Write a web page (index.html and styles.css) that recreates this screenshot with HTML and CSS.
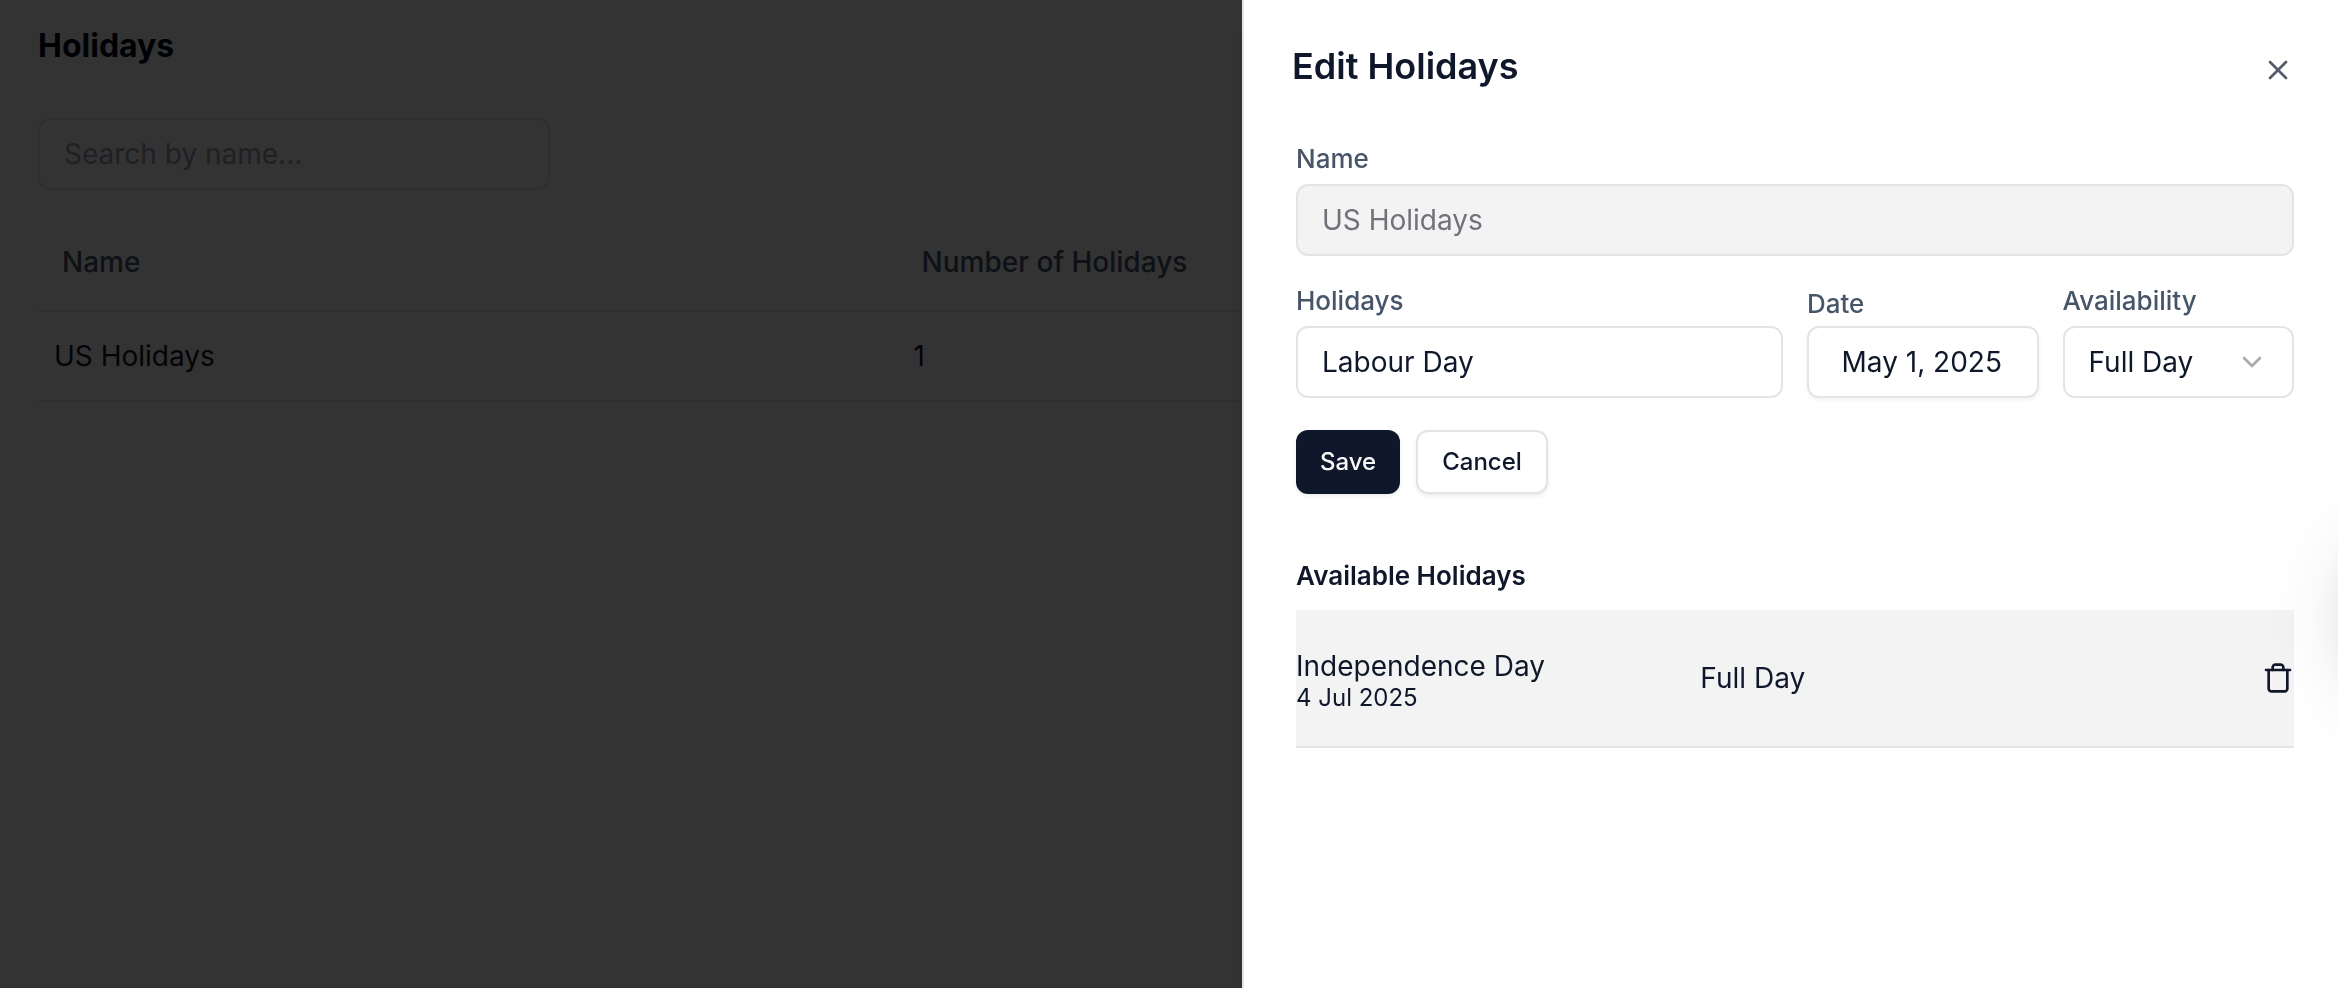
FILE: index.html
```html
<!DOCTYPE html>
<html lang="en">
<head>
<meta charset="utf-8">
<meta name="viewport" content="width=device-width, initial-scale=1">
<title>Holidays</title>
<link rel="stylesheet" href="styles.css">
</head>
<body>
<main class="page">
  <h1 class="page-title">Holidays</h1>
  <input class="input search" type="text" placeholder="Search by name..." aria-label="Search by name">
  <table class="table">
    <thead>
      <tr><th class="col-name" scope="col">Name</th><th scope="col">Number of Holidays</th></tr>
    </thead>
    <tbody>
      <tr><td>US Holidays</td><td>1</td></tr>
    </tbody>
  </table>
</main>
<div class="overlay"></div>
<aside class="drawer" role="dialog" aria-labelledby="drawer-title">
  <header class="drawer-header">
    <h2 class="drawer-title" id="drawer-title">Edit Holidays</h2>
    <button class="icon-button close" type="button" aria-label="Close">
      <svg class="icon" viewBox="0 0 24 24"><path d="M18 6 6 18"/><path d="m6 6 12 12"/></svg>
    </button>
  </header>
  <form class="form">
    <div class="field">
      <label class="label" for="group-name">Name</label>
      <input class="input" id="group-name" type="text" value="US Holidays" disabled>
    </div>
    <div class="field-row">
      <div class="field field-wide">
        <label class="label" for="holiday">Holidays</label>
        <input class="input" id="holiday" type="text" value="Labour Day">
      </div>
      <div class="field field-date">
        <label class="label" for="date">Date</label>
        <button class="input date-button" id="date" type="button">May 1, 2025</button>
      </div>
      <div class="field">
        <label class="label" for="availability">Availability</label>
        <div class="select-wrap">
          <select class="input select" id="availability">
            <option>Full Day</option>
            <option>Half Day</option>
          </select>
          <svg class="icon chevron" viewBox="0 0 24 24" aria-hidden="true"><path d="m6 9 6 6 6-6"/></svg>
        </div>
      </div>
    </div>
    <div class="actions">
      <button class="button primary" type="button">Save</button>
      <button class="button" type="button">Cancel</button>
    </div>
  </form>
  <section class="available">
    <h3 class="section-title">Available Holidays</h3>
    <ul class="list">
      <li class="item">
        <div class="item-main">
          <div class="item-name">Independence Day</div>
          <div class="item-date">4 Jul 2025</div>
        </div>
        <div class="item-type">Full Day</div>
        <button class="icon-button" type="button" aria-label="Delete Independence Day">
          <svg class="icon" viewBox="0 0 24 24"><path d="M3 6h18"/><path d="M19 6v14c0 1-1 2-2 2H7c-1 0-2-1-2-2V6"/><path d="M8 6V4c0-1 1-2 2-2h4c1 0 2 1 2 2v2"/></svg>
        </button>
      </li>
    </ul>
  </section>
</aside>
<div class="edge-glow"></div>
</body>
</html>
```
FILE: styles.css
```css
*,
*::before,
*::after {
  box-sizing: border-box;
}

body {
  margin: 0;
  min-height: 100vh;
  overflow: hidden;
  background: #fff;
  color: #0f172a;
  font-family: Inter, "Liberation Sans", sans-serif;
  font-size: 28px;
  line-height: 40px;
}

h1,
h2,
h3,
ul {
  margin: 0;
  padding: 0;
}

button,
input,
select {
  font: inherit;
  color: inherit;
}

.page {
  min-height: 100vh;
  padding: 26px 38px;
  border-bottom: 1px solid #f8ecf8;
}

.page-title {
  margin-bottom: 52px;
  color: #020617;
  font-size: 32px;
  font-weight: 700;
}

.input {
  display: block;
  width: 100%;
  height: 72px;
  padding: 0 24px;
  border: 2px solid #e4e4e4;
  border-radius: 12px;
  background: #fff;
}

.input:disabled {
  background: #f3f3f3;
  color: #71717a;
}

.search {
  width: 512px;
  margin-bottom: 28px;
}

.search::placeholder {
  color: #9a9ab4;
  opacity: 1;
}

.table {
  width: 100%;
  border-collapse: separate;
  border-spacing: 0;
}

.table th,
.table td {
  padding: 24px 16px;
  border-bottom: 2px solid #e4e4e7;
  text-align: left;
}

.table th {
  padding: 24px 24px 28px;
  color: #475569;
  font-weight: 500;
}

.table .col-name {
  width: 38%;
}

.overlay {
  position: fixed;
  inset: 0;
  background: rgba(0, 0, 0, 0.8);
}

.drawer {
  position: fixed;
  top: 0;
  right: 0;
  bottom: 0;
  width: 1096px;
  max-width: 100%;
  padding: 48px 44px 48px 48px;
  border-left: 2px solid #e4e4e4;
  background: #fff;
  box-shadow: 0 20px 30px -6px rgba(0, 0, 0, 0.1), 0 8px 12px -8px rgba(0, 0, 0, 0.1);
}

.drawer-header {
  display: flex;
  align-items: flex-end;
  justify-content: space-between;
  margin-bottom: 59px;
}

.drawer-title {
  margin-bottom: 2px;
  font-size: 36px;
  font-weight: 600;
  line-height: 36px;
}

.icon-button {
  display: block;
  width: 32px;
  height: 32px;
  padding: 0;
  border: 0;
  background: none;
}

.icon {
  display: block;
  width: 32px;
  height: 32px;
  fill: none;
  stroke: currentColor;
  stroke-width: 2;
  stroke-linecap: round;
  stroke-linejoin: round;
}

.close {
  opacity: 0.7;
}

.form,
.available {
  margin-left: 4px;
}

.field {
  display: flex;
  flex-direction: column;
  justify-content: flex-end;
  gap: 11px;
}

.field-date {
  gap: 8px;
}

.field-row {
  display: grid;
  grid-template-columns: repeat(4, minmax(0, 1fr));
  gap: 24px;
  margin-top: 31px;
}

.field-wide {
  grid-column: span 2;
}

.label {
  color: #475569;
  font-size: 26px;
  font-weight: 500;
  line-height: 28px;
}

.date-button {
  padding: 0 2px 0 0;
  box-shadow: 0 2px 4px rgba(0, 0, 0, 0.05);
}

.select-wrap {
  position: relative;
}

.select {
  appearance: none;
}

.chevron {
  position: absolute;
  top: 20px;
  right: 26px;
  color: #aaa;
  pointer-events: none;
}

.actions {
  display: flex;
  gap: 16px;
  margin-top: 32px;
}

.button {
  height: 64px;
  padding: 0 24px;
  border: 2px solid #e4e4e4;
  border-radius: 12px;
  background: #fff;
  box-shadow: 0 2px 4px rgba(0, 0, 0, 0.08);
  font-size: 24px;
  font-weight: 500;
}

.primary {
  border: 0;
  background: #0f172a;
  color: #f8fafc;
}

.available {
  margin-top: 68px;
}

.section-title {
  margin-bottom: 20px;
  font-size: 26px;
  font-weight: 600;
  line-height: 28px;
}

.list {
  list-style: none;
}

.item {
  display: grid;
  grid-template-columns: 18fr 25fr 32px;
  align-items: center;
  padding: 34px 0;
  border-bottom: 2px solid #e4e4e4;
  background: #f3f3f3;
}

.item-main {
  padding-top: 4px;
}

.item-name {
  line-height: 36px;
}

.item-date {
  font-size: 24px;
  line-height: 28px;
}

/* Soft shadow of a widget docked past the right edge */
.edge-glow {
  position: fixed;
  top: 448px;
  right: 0;
  width: 70px;
  height: 340px;
  background: radial-gradient(circle at 170px 170px, rgba(0, 0, 0, 0.06) 98px, rgba(0, 0, 0, 0.02) 125px, rgba(0, 0, 0, 0.008) 148px, transparent 170px);
  pointer-events: none;
}
```
